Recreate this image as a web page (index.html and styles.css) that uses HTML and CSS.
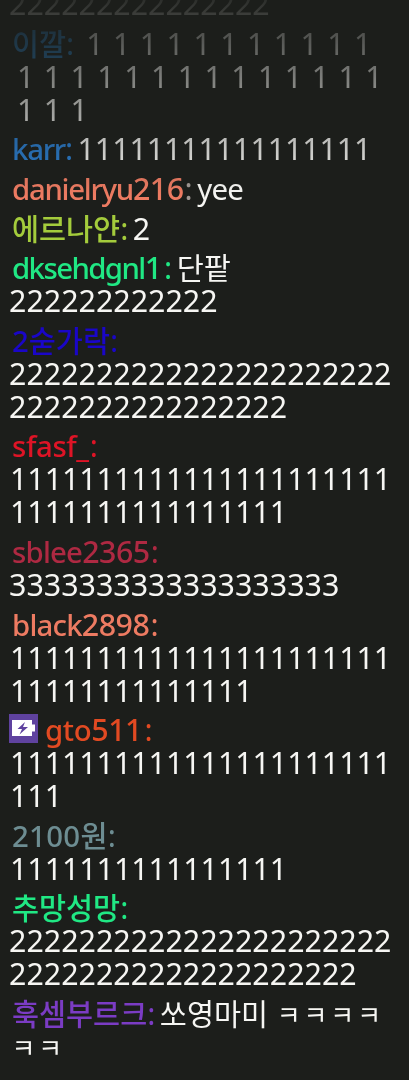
FILE: index.html
```html
<!DOCTYPE html>
<html lang="ko">
<head>
<meta charset="utf-8">
<title>Chat</title>
<link rel="stylesheet" href="styles.css">
</head>
<body>
<main class="chat">
  <div class="message"><p>222222222222222</p></div>
  <div class="message spaced"><p><b class="name blue-dim ko">이깔</b><i class="colon blue-dim">:</i><span class="text far">1 1 1 1 1 1 1 1 1 1 1</span></p><p class="indent">1 1 1 1 1 1 1 1 1 1 1 1 1 1</p><p class="indent">1 1 1</p></div>
  <div class="message"><p><b class="name blue"><span class="latin narrow">karr</span></b><i class="colon blue">:</i><span class="text tight">11111111111111111</span></p></div>
  <div class="message"><p><b class="name coral"><span class="latin narrow">danielryu</span>216</b><i class="colon grey apart">:</i><span class="text latin">yee</span></p></div>
  <div class="message"><p><b class="name lime ko">에르나얀</b><i class="colon lime">:</i><span class="text">2</span></p></div>
  <div class="message"><p><b class="name green"><span class="latin narrower">dksehdgnl</span>1</b><i class="colon green apart-wide">:</i><span class="text ko">단팥</span></p><p>222222222222</p></div>
  <div class="message"><p><b class="name navy ko">2숟가락</b><i class="colon navy">:</i></p><p>2222222222222222222222</p><p>2222222222222222</p></div>
  <div class="message"><p><b class="name red"><span class="latin wide">sfasf_</span></b><i class="colon red apart">:</i></p><p class="ones">1111111111111111111111</p><p class="ones">1111111111111111</p></div>
  <div class="message"><p><b class="name crimson"><span class="latin">sblee</span>2365</b><i class="colon crimson apart">:</i></p><p>3333333333333333333</p></div>
  <div class="message"><p><b class="name coral"><span class="latin">black</span>2898</b><i class="colon coral apart">:</i></p><p class="ones">1111111111111111111111</p><p class="ones">11111111111111</p></div>
  <div class="message"><p><svg class="badge" viewBox="0 0 29 29"><rect width="29" height="29" fill="#5f429f"/><path d="M3 6h20v4.500h3v7h-3v4.500H3z" fill="#fff"/><path d="M16 8 8.500 15h4.500L10.500 20.500l8.500-7.500h-5z" fill="#5f429f"/></svg><b class="name orange"><span class="latin wide">gto</span>511</b><i class="colon orange apart-wide">:</i></p><p class="ones">1111111111111111111111</p><p class="ones">111</p></div>
  <div class="message"><p><b class="name slate ko won">2100원</b><i class="colon slate">:</i></p><p class="ones">1111111111111111</p></div>
  <div class="message"><p><b class="name green ko">추망성망</b><i class="colon green">:</i></p><p>2222222222222222222222</p><p>22222222222222222222</p></div>
  <div class="message"><p><b class="name purple ko">훅셈부르크</b><i class="colon purple">:</i><span class="text ko">쏘영마미 <span class="jamo">ㅋㅋㅋㅋ</span></span></p><p><span class="jamo">ㅋㅋ</span></p></div>
</main>
</body>
</html>
```
FILE: styles.css
```css
* { box-sizing: border-box; }
body { margin: 0; background: #1c1e1b; }
.chat {
  display: flex;
  flex-direction: column;
  justify-content: flex-end;
  gap: 6.6px;
  height: 1080px;
  padding: 0 0 17px 9px;
  overflow: hidden;
  color: #f6f6f3;
  font-family: "Noto Sans", "Noto Sans CJK KR", sans-serif;
  font-size: 30.4px;
  -webkit-mask-image: linear-gradient(rgba(0,0,0,.08), #000 195px);
  mask-image: linear-gradient(rgba(0,0,0,.08), #000 195px);
}
.message { flex: none; }
p { margin: 0; height: 33px; line-height: 33px; white-space: nowrap; }
.name { margin-left: 3px; font-weight: 500; letter-spacing: -.5px; }
.latin { font-size: 29.4px; letter-spacing: -.8px; }
.narrow { letter-spacing: -1.3px; }
.narrower { letter-spacing: -1.6px; }
.wide { letter-spacing: -.4px; }
.colon { font-style: normal; font-weight: 400; }
.apart { margin-left: 1px; }
.apart-wide { margin-left: 2.5px; }
.text { margin-left: 4.5px; }
.far { margin-left: 12px; }
.tight { letter-spacing: -.1px; margin-left: 4.5px; }
.ko { font-size: 29.4px; }
.name.ko { letter-spacing: 0; }
.name.won { letter-spacing: .3px; }
.spaced { word-spacing: 1.5px; }
.indent { padding-left: 8px; }
.ones { padding-left: 1px; letter-spacing: -.06px; }
.jamo { margin-left: 1px; font-size: 26px; letter-spacing: 2.9px; }
p > .jamo:first-child { margin-left: 2.5px; }
.badge { width: 29px; height: 29px; vertical-align: -2px; margin-right: 4px; }
.blue-dim { color: #2878b8; }
.blue { color: #2b7fd2; }
.coral { color: #ed7b62; }
.grey { color: #a09894; }
.lime { color: #a4cc3c; }
.green { color: #20e884; }
.navy { color: #1a06c8; }
.red { color: #de1426; }
.crimson { color: #ae2942; }
.orange { color: #e24a22; }
.slate { color: #6d8d92; }
.purple { color: #7b3cc4; }
```
